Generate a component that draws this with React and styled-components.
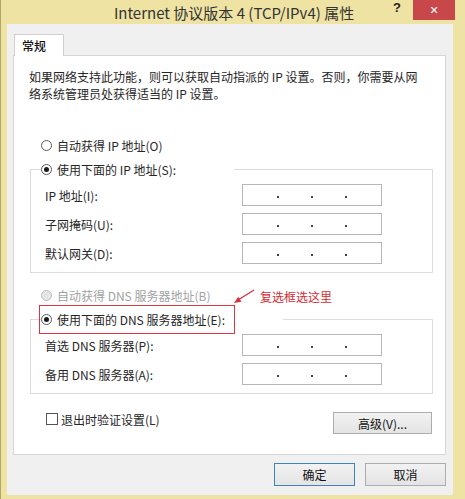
import styled, { createGlobalStyle } from 'styled-components';

const GlobalStyle = createGlobalStyle`
  html, body { margin: 0; padding: 0; }
  body {
    font-family: "Noto Sans CJK SC", "Noto Sans", sans-serif;
    font-size: 12px;
    color: #262626;
  }
`;

function RadioItem({ checked, disabled, children }) {
    return (
        <>
            <RadioCircle checked={checked} disabled={disabled} />
            <span>{children}</span>
        </>
    );
}

function IpField() {
    return (
        <IpBox>
            <Dot />
            <Dot />
            <Dot />
        </IpBox>
    );
}

function App() {
    return (
        <>
            <GlobalStyle />
            <Window>
                <TitleBar>
                    <Title>Internet 协议版本 4 (TCP/IPv4) 属性</Title>
                    <Help>?</Help>
                    <Close>✕</Close>
                </TitleBar>
                <Client>
                    <Tab>常规</Tab>
                    <Panel>
                        <Desc>
                            如果网络支持此功能，则可以获取自动指派的 IP 设置。否则，你需要从网<br />
                            络系统管理员处获得适当的 IP 设置。
                        </Desc>

                        <RadioRow gap={34}>
                            <RadioItem>自动获得 IP 地址(O)</RadioItem>
                        </RadioRow>

                        <GroupBox>
                            <Legend>
                                <RadioItem checked>使用下面的 IP 地址(S):</RadioItem>
                            </Legend>
                            <Rows>
                                <Row><span>IP 地址(I):</span><IpField /></Row>
                                <Row><span>子网掩码(U):</span><IpField /></Row>
                                <Row><span>默认网关(D):</span><IpField /></Row>
                            </Rows>
                        </GroupBox>

                        <RadioRow gap={13} disabled>
                            <RadioItem disabled>自动获得 DNS 服务器地址(B)</RadioItem>
                        </RadioRow>

                        <GroupBox>
                            <Legend>
                                <RadioItem checked>使用下面的 DNS 服务器地址(E):</RadioItem>
                                <Highlight />
                                <Arrow width="30" height="20" viewBox="0 0 30 20">
                                    <line x1="23" y1="4" x2="7" y2="14" stroke="#d8323a" strokeWidth="1.3" />
                                    <polygon points="3,17 10.5,15.8 7.3,10.8" fill="#d8323a" />
                                </Arrow>
                                <Note>复选框选这里</Note>
                            </Legend>
                            <Rows>
                                <Row><span>首选 DNS 服务器(P):</span><IpField /></Row>
                                <Row><span>备用 DNS 服务器(A):</span><IpField /></Row>
                            </Rows>
                        </GroupBox>

                        <CheckRow>
                            <CheckLabel>
                                <CheckBox />
                                <span>退出时验证设置(L)</span>
                            </CheckLabel>
                            <Button wide>高级(V)...</Button>
                        </CheckRow>
                    </Panel>
                    <Footer>
                        <Button primary>确定</Button>
                        <Button>取消</Button>
                    </Footer>
                </Client>
            </Window>
        </>
    );
}

export const Window = styled.div`
    width: 465px;
    height: 499px;
    box-sizing: border-box;
    background: #efe3a4;
    border-left: 1px solid #b4a667;
    display: flex;
    flex-direction: column;
`
export const TitleBar = styled.div`
    height: 24px;
    display: flex;
    align-items: flex-start;
    flex-shrink: 0;
`
export const Title = styled.div`
    flex: 1;
    padding-left: 74px;
    text-align: center;
    font-size: 15px;
    line-height: 26px;
    color: #333;
`
export const Help = styled.div`
    font-family: "Liberation Sans", sans-serif;
    font-weight: bold;
    font-size: 13px;
    line-height: 16px;
    margin-right: 12px;
    color: #222;
`
export const Close = styled.div`
    width: 42px;
    height: 20px;
    margin-right: 10px;
    background: #c8474b;
    color: #fff;
    font-family: "DejaVu Sans", sans-serif;
    font-size: 11px;
    display: flex;
    align-items: center;
    justify-content: center;
`
export const Client = styled.div`
    flex: 1;
    margin: 0 12px 4px 6px;
    padding: 10px 7px 8px 6px;
    background: #f0f0f0;
    display: flex;
    flex-direction: column;
`
export const Tab = styled.div`
    width: 50px;
    height: 22px;
    box-sizing: border-box;
    margin: 0 0 -1px 1px;
    padding-left: 7px;
    line-height: 22px;
    background: #fff;
    border: 1px solid #cfcfcf;
    border-bottom: none;
    position: relative;
    z-index: 1;
    color: #111;
    font-weight: 500;
`
export const Panel = styled.div`
    height: 400px;
    box-sizing: border-box;
    border: 1px solid #d6d6d6;
    background: #fff;
    padding: 12px 12px 0 15px;
    display: flex;
    flex-direction: column;
`
export const Desc = styled.p`
    margin: 0;
    line-height: 17px;
`
export const RadioRow = styled.div`
    display: flex;
    align-items: center;
    gap: 5px;
    height: 18px;
    margin: ${(p) => p.gap}px 0 0 12px;
    color: ${(p) => (p.disabled ? '#a2a2a2' : 'inherit')};
`
export const RadioCircle = styled.span`
    width: 11px;
    height: 11px;
    box-sizing: border-box;
    border-radius: 50%;
    border: 1px solid ${(p) => (p.disabled ? '#bcbcbc' : '#5a5a5a')};
    background: ${(p) => (p.disabled ? '#e6e6e6' : '#fff')};
    display: flex;
    align-items: center;
    justify-content: center;
    flex-shrink: 0;
    &::after {
        content: '';
        display: ${(p) => (p.checked ? 'block' : 'none')};
        width: 5px;
        height: 5px;
        border-radius: 50%;
        background: #1a1a1a;
    }
`
export const GroupBox = styled.div`
    margin: 15px 0 0 1px;
    border: 1px solid #dcdcdc;
    padding: 0 0 8px 14px;
    display: flex;
    flex-direction: column;
`
export const Legend = styled.div`
    position: relative;
    align-self: flex-start;
    display: flex;
    align-items: center;
    gap: 5px;
    height: 18px;
    margin: -10px 0 0 -4px;
    padding-right: 58px;
    background: #fff;
`
export const Highlight = styled.span`
    position: absolute;
    left: -2px;
    top: -5px;
    width: 196px;
    height: 29px;
    box-sizing: border-box;
    border: 1.5px solid #d9363e;
`
export const Arrow = styled.svg`
    position: absolute;
    left: 190px;
    top: -24px;
`
export const Note = styled.span`
    position: absolute;
    left: 219px;
    top: -22px;
    white-space: nowrap;
    font-size: 12px;
    line-height: 18px;
    color: #d22d35;
`
export const Rows = styled.div`
    margin-top: 6px;
    display: flex;
    flex-direction: column;
    gap: 7px;
`
export const Row = styled.div`
    display: grid;
    grid-template-columns: 197px 140px;
    align-items: center;
    height: 22px;
`
export const IpBox = styled.div`
    height: 22px;
    box-sizing: border-box;
    border: 1px solid #b6b6b6;
    display: flex;
    align-items: center;
    justify-content: center;
    gap: 32px;
`
export const Dot = styled.span`
    width: 2px;
    height: 2px;
    margin-top: 4px;
    background: #444;
`
export const CheckRow = styled.div`
    display: flex;
    justify-content: space-between;
    align-items: flex-start;
    margin: 16px 1px 0 17px;
`
export const CheckLabel = styled.div`
    display: flex;
    align-items: center;
    gap: 3px;
    height: 18px;
`
export const CheckBox = styled.span`
    width: 12px;
    height: 12px;
    box-sizing: border-box;
    border: 1px solid #555;
    background: #fff;
`
export const Button = styled.div`
    width: ${(p) => (p.wide ? '99px' : '81px')};
    height: ${(p) => (p.wide ? '22px' : '23px')};
    margin-top: ${(p) => (p.wide ? '2px' : '0')};
    box-sizing: border-box;
    border: 1px solid ${(p) => (p.primary ? '#3f83bb' : '#acacac')};
    background: linear-gradient(#f2f2f2, #e4e4e4);
    display: flex;
    align-items: center;
    justify-content: center;
    color: #111;
`
export const Footer = styled.div`
    display: flex;
    justify-content: flex-end;
    gap: 10px;
    margin-top: 8px;
`

export default App
